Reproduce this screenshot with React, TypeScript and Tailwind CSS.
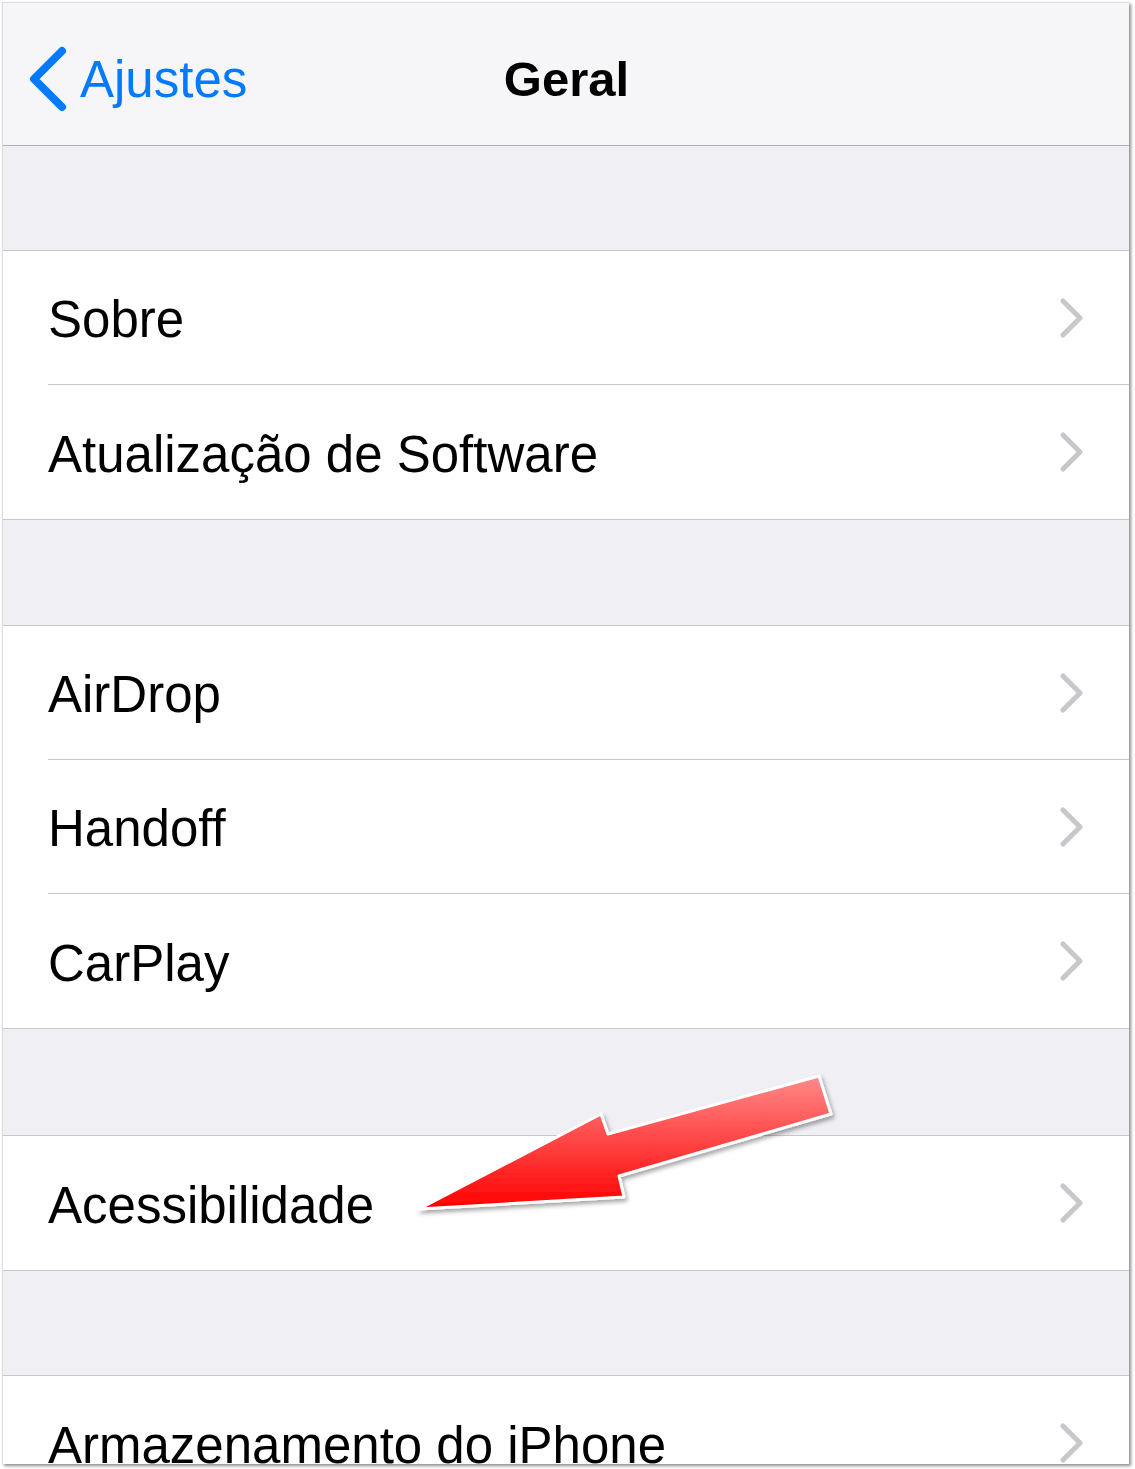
import React from "react";

const groups: { gap: string; rows: string[] }[] = [
  { gap: "pt-[104px]", rows: ["Sobre", "Atualização de Software"] },
  { gap: "pt-[105px]", rows: ["AirDrop", "Handoff", "CarPlay"] },
  { gap: "pt-[106px]", rows: ["Acessibilidade"] },
  { gap: "pt-[104px]", rows: ["Armazenamento do iPhone"] },
];

function Chevron() {
  return (
    <svg width="26" height="40" viewBox="0 0 26 40" className="shrink-0">
      <path d="M4 3 L21 20 L4 37" fill="none" stroke="#c7c7cc" strokeWidth="5" strokeLinecap="round" strokeLinejoin="round" />
    </svg>
  );
}

function Row({ label, last }: { label: string; last: boolean }) {
  return (
    <div className="h-[134px] flex items-center pl-[45px] bg-white">
      <div className={`h-full flex-1 flex items-center justify-between pr-[44px] ${last ? "" : "border-b border-[#c8c7cc]"}`}>
        <span className="text-[51px] text-black leading-none pt-[4px]">{label}</span>
        <Chevron />
      </div>
    </div>
  );
}

export default function App() {
  return (
    <div className="w-[1135px] h-[1469px] bg-white pt-[2px] pl-[2px]" style={{ fontFamily: '"Liberation Sans", Arial, sans-serif' }}>
      <div className="relative w-[1127px] h-[1462px] overflow-hidden border-l border-t border-[#dcdcdc] shadow-[2px_2px_3px_rgba(0,0,0,0.45)] bg-[#efeff4]">
        {/* nav bar */}
        <div className="h-[143px] bg-[#f6f6f8] border-b border-[#b2b2b2] flex items-center relative">
          <div className="flex items-center pl-[25px] pt-[10px] text-[#007aff] gap-[12px]">
            <svg width="40" height="66" viewBox="0 0 40 66">
              <path d="M34 5 L6 33 L34 61" fill="none" stroke="#007aff" strokeWidth="8" strokeLinecap="round" strokeLinejoin="round" />
            </svg>
            <span className="text-[51px] leading-none">Ajustes</span>
          </div>
          <div className="absolute inset-0 flex items-center justify-center pt-[10px]">
            <span className="text-[49px] font-bold leading-none text-black ml-[1px]">Geral</span>
          </div>
        </div>
        {groups.map((g, gi) => (
          <div key={gi} className={g.gap}>
            <div className="border-t border-b border-[#c8c7cc]">
              {g.rows.map((label, i) => (
                <Row key={label} label={label} last={i === g.rows.length - 1} />
              ))}
            </div>
          </div>
        ))}
        {/* annotation arrow */}
        <svg className="absolute left-0 top-0" width="1127" height="1462" viewBox="2 2 1127 1462">
          <defs>
            <linearGradient id="ag" x1="0" y1="0" x2="0" y2="1">
              <stop offset="0" stopColor="#ff8a8a" />
              <stop offset="0.45" stopColor="#ff4a4a" />
              <stop offset="1" stopColor="#ff0000" />
            </linearGradient>
            <filter id="sh" x="-10%" y="-30%" width="120%" height="160%">
              <feDropShadow dx="2" dy="3" stdDeviation="2" floodColor="#000" floodOpacity="0.35" />
            </filter>
          </defs>
          <polygon
            points="418,1208 600,1113 607,1133 818,1075 830,1113 618,1175 623,1196"
            fill="url(#ag)"
            stroke="#ffffff"
            strokeWidth="3"
            strokeLinejoin="round"
            filter="url(#sh)"
          />
        </svg>
      </div>
    </div>
  );
}
